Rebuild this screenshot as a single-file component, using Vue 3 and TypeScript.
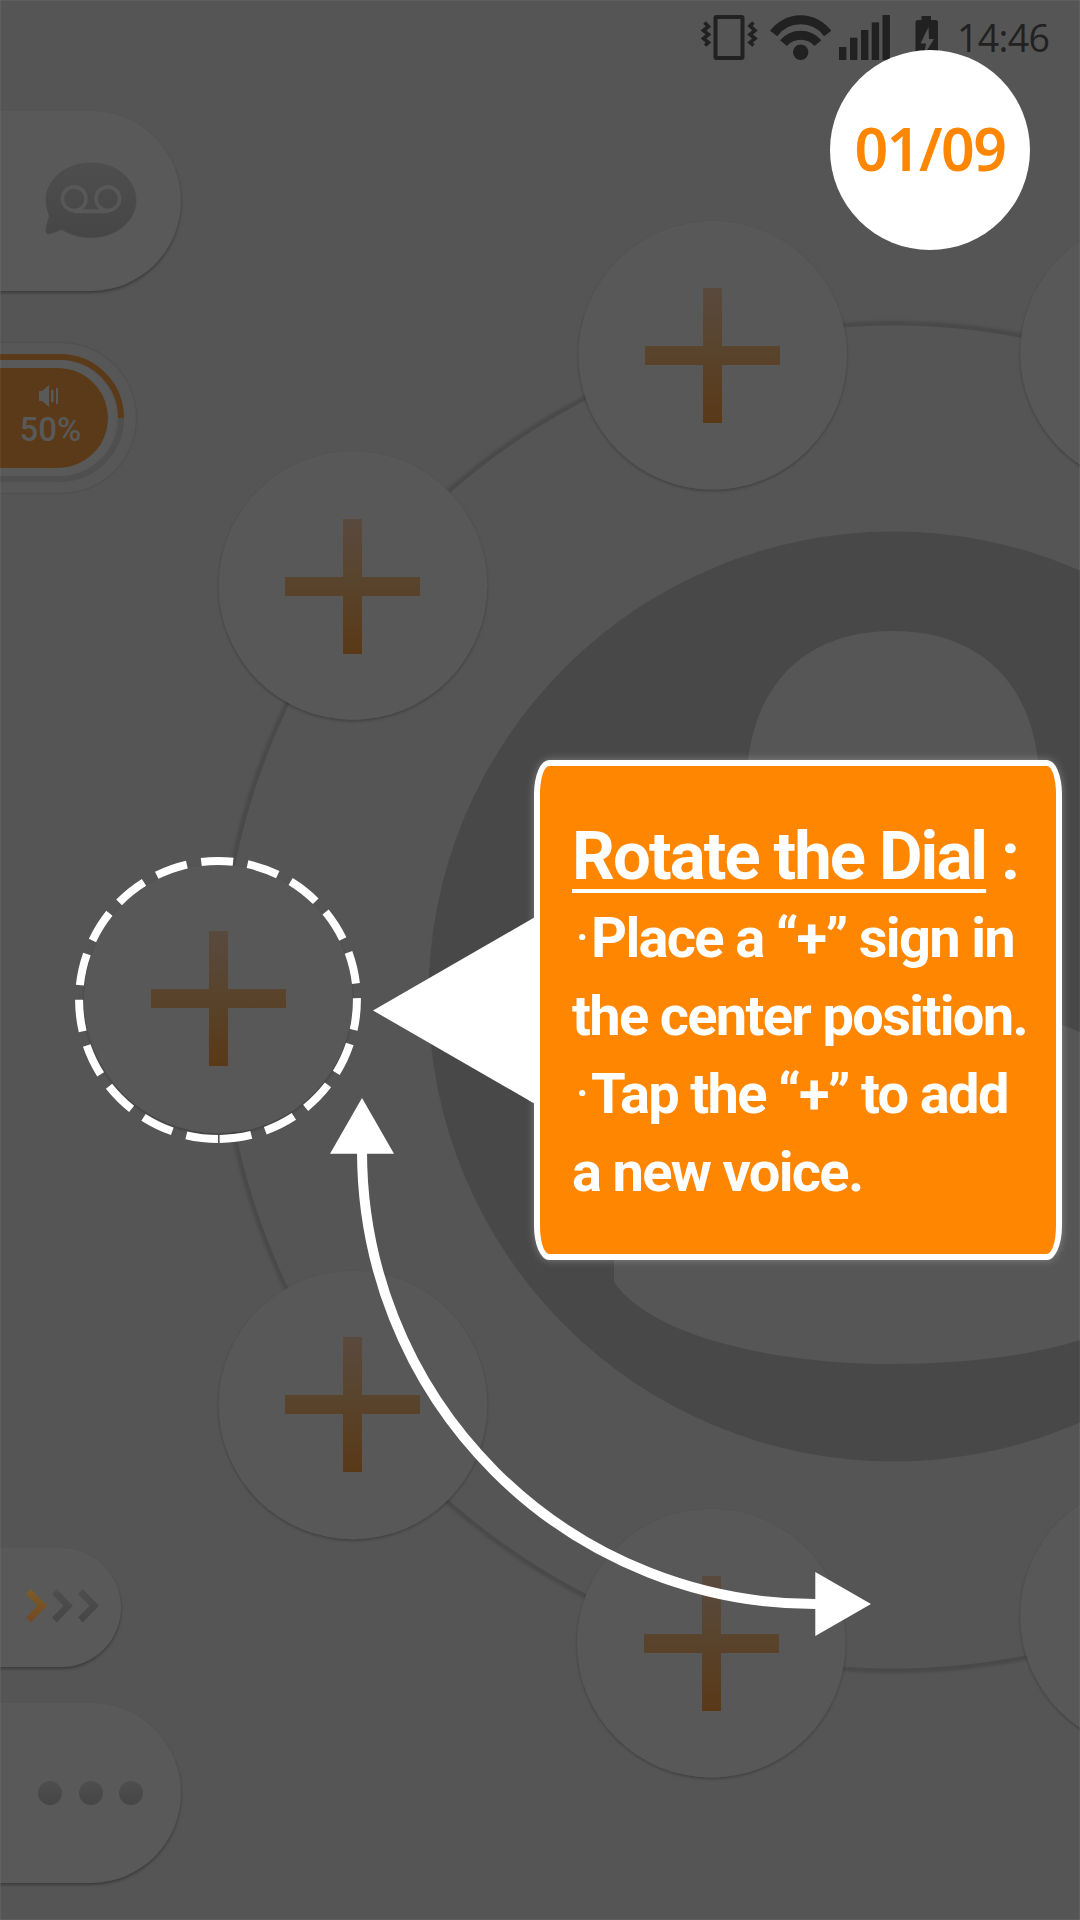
<script setup lang="ts">
interface Slot { x: number; y: number; px: number; py: number; plus: boolean }

const slots: Slot[] = [
  { x: 712.7, y: 355.3, px: 712.5, py: 355.5, plus: true },
  { x: 353, y: 585.5, px: 352.5, py: 586.5, plus: true },
  { x: 218.3, y: 999, px: 218.5, py: 998.5, plus: true },
  { x: 353, y: 1405, px: 352.5, py: 1404.5, plus: true },
  { x: 711.3, y: 1643.2, px: 711.5, py: 1643.5, plus: true },
  { x: 1154.5, y: 353, px: 0, py: 0, plus: false },
  { x: 1154.5, y: 1616, px: 0, py: 0, plus: false },
]

const bars = [
  { x: 0, y: 32 },
  { x: 11, y: 22.7 },
  { x: 22, y: 15 },
  { x: 32.7, y: 7.4 },
  { x: 43.5, y: 0 },
]
</script>

<template>
  <main class="screen">
    <svg class="dial" width="1080" height="1920" viewBox="0 0 1080 1920">
      <defs>
        <radialGradient id="rim" gradientUnits="userSpaceOnUse" cx="893.5" cy="997" r="679">
          <stop offset="0.9882" stop-color="#555555" />
          <stop offset="0.9897" stop-color="#494949" />
          <stop offset="0.9935" stop-color="#4a4a4a" />
          <stop offset="0.997" stop-color="#525252" />
          <stop offset="1" stop-color="#555555" />
        </radialGradient>
        <linearGradient id="plus" x1="0" y1="-67.5" x2="0" y2="67.5" gradientUnits="userSpaceOnUse">
          <stop offset="0" stop-color="#594a3e" />
          <stop offset="0.5" stop-color="#59432b" />
          <stop offset="1" stop-color="#593917" />
        </linearGradient>
        <filter id="drop" x="-10%" y="-10%" width="120%" height="120%">
          <feDropShadow dx="0" dy="1.5" stdDeviation="1.6" flood-color="#000" flood-opacity="0.28" />
        </filter>
      </defs>
      <circle cx="893.5" cy="997" r="679" fill="url(#rim)" />
      <circle cx="893.5" cy="996.5" r="465" fill="#484848" />
      <path fill="#565656" d="M747 770C753 690 800 631 893 631S1033 690 1039 770Z" />
      <path fill="#565656" d="M614 1240V1282C650 1335 770 1364 893 1364C965 1364 1030 1356 1080 1340V1032L1050 1020V1240Z" />
      <g v-for="(s, i) in slots" :key="i">
        <circle :cx="s.x" :cy="s.y" r="134.2" fill="#595959" filter="url(#drop)" />
        <path
          v-if="s.plus"
          :transform="`translate(${s.px} ${s.py})`"
          fill="url(#plus)"
          d="M-9.500 -67.500h19v58h58v19h-58v58h-19v-58h-58v-19h58z"
        />
      </g>
    </svg>

    <header class="status">
      <svg class="vibrate" width="58" height="46" viewBox="0 0 58 46">
        <rect x="15.500" y="2" width="27" height="41" rx="1" fill="none" stroke="#212121" stroke-width="4" />
        <g fill="none" stroke="#212121" stroke-width="3.600">
          <path d="M4.500 7.500L8.500 11.500L3.500 15.500L8.500 19.500L3.500 23.500L8.500 27.500L5 30.500" />
          <path d="M53.500 7.500L50 11L55 15.500L50 19.500L55 23.500L50 27.500L53.500 30.500" />
        </g>
      </svg>
      <svg class="wifi" width="62" height="46" viewBox="0 0 62 46">
        <g fill="none" stroke="#212121" stroke-width="9">
          <path d="M3.700 18.500A33.500 33.500 0 0 1 57.700 18.500" />
          <path d="M13.500 28.200A22.500 22.500 0 0 1 47.900 28.200" />
        </g>
        <circle cx="30.700" cy="37.300" r="7.700" fill="#212121" />
      </svg>
      <svg class="signal" width="51" height="46" viewBox="0 0 51 46">
        <rect v-for="b in bars" :key="b.x" :x="b.x" :y="b.y" width="7.400" :height="45 - b.y" fill="#212121" />
      </svg>
      <svg class="battery" width="24" height="46" viewBox="0 0 24 46">
        <path fill="#212121" d="M6.500 1h9.500v4h4.500q2.500 0 2.500 2.500V46H.5V7.500Q.5 5 3 5h3.500z" />
        <path fill="#555555" d="M13.500 12L5.500 28.500h5.500L9 40L19 24h-5z" />
      </svg>
      <time class="clock">14:46</time>
    </header>

    <aside class="rail">
      <div class="pill voicemail">
        <svg width="92" height="78" viewBox="45 162 92 78">
          <defs>
            <linearGradient id="grey" x1="0" y1="0" x2="0" y2="1">
              <stop offset="0" stop-color="#4e4e4e" />
              <stop offset="1" stop-color="#464646" />
            </linearGradient>
          </defs>
          <path
            fill="url(#grey)"
            stroke="#484848"
            stroke-width=".6"
            d="M91 163C116 163 136 179.500 136 200.300S116 237.600 91 237.600C80 237.600 69.500 234.500 61.500 229.300Q55.500 232 50 233.800Q45.500 234.500 46 230Q46.800 222.500 49.500 216Q46 208.500 46 200.300C46 179.500 66 163 91 163Z"
          />
          <g fill="none" stroke="#585858" stroke-width="3.600">
            <circle cx="74.200" cy="198.700" r="11.800" />
            <circle cx="107.800" cy="198.700" r="11.800" />
            <path d="M74 211.200H108" stroke-width="4" />
          </g>
        </svg>
      </div>
      <div class="volume">
        <svg class="track" width="136" height="150" viewBox="0 0 136 150">
          <path d="M0 136H60A61 61 0 0 0 121 75" fill="none" stroke="#4f4f4f" stroke-width="6" />
          <path d="M0 14H60A61 61 0 0 1 121 75" fill="none" stroke="#5a3a19" stroke-width="6" />
        </svg>
        <div class="level">
          <svg width="20" height="22" viewBox="0 0 20 22">
            <path fill="#595959" d="M0 6h3L10 0v22L3 16H0zM12 5h2.500v12H12zM17 3h2v16h-2z" />
          </svg>
          <span>50%</span>
        </div>
      </div>
      <div class="pill arrows">
        <svg width="74" height="34" viewBox="0 0 74 34">
          <defs>
            <linearGradient id="amber" x1="0" y1="0" x2="0" y2="1">
              <stop offset="0" stop-color="#7d5d27" />
              <stop offset="1" stop-color="#734722" />
            </linearGradient>
          </defs>
          <path fill="url(#amber)" d="M4.700 0L21 16.700L4.700 33.400L0 28.500L11.500 16.700L0 4.900Z" />
          <path fill="url(#grey)" d="M30.700 0L47 16.700L30.700 33.400L26 28.500L37.500 16.700L26 4.900Z" />
          <path fill="url(#grey)" d="M56.700 0L73 16.700L56.700 33.400L52 28.500L63.500 16.700L52 4.900Z" />
        </svg>
      </div>
      <div class="pill more"><i v-for="n in 3" :key="n" /></div>
    </aside>

    <svg class="guides" width="1080" height="1920" viewBox="0 0 1080 1920">
      <path
        d="M218 1139A139 139 0 0 1 218 861A139 139 0 0 1 218 1139"
        fill="none" stroke="#fff" stroke-width="8" stroke-dasharray="32 14.610"
      />
      <path d="M362 1151A453 453 0 0 0 816 1604" fill="none" stroke="#fff" stroke-width="10" />
      <path fill="#fff" d="M362 1098L394 1153.700H330ZM871 1604L815.300 1572V1636ZM373 1010.500L536 916.500V1104.500Z" />
    </svg>

    <section class="card">
      <h1><u>Rotate the Dial</u> :</h1>
      <p><b>·</b>Place a “+” sign in</p>
      <p>the center position.</p>
      <p><b>·</b>Tap the “+” to add</p>
      <p>a new voice.</p>
    </section>

    <div class="step">01/09</div>
    <div class="frame" />
  </main>
</template>

<style>
body { margin: 0; background: #555555; }
</style>

<style scoped>
.screen {
  position: relative;
  width: 1080px;
  height: 1920px;
  overflow: hidden;
  background: #555555;
  font-family: Roboto, "Liberation Sans", sans-serif;
}
.dial, .guides, .frame { position: absolute; inset: 0; }
.frame { border: 1px solid rgba(255, 255, 255, 0.06); }
.status {
  position: relative;
  display: flex;
  height: 111px;
  padding: 15px 29px 0 0;
  box-sizing: border-box;
  justify-content: flex-end;
  align-items: flex-start;
}
.wifi { margin-left: 12px; }
.signal { margin-left: 7px; }
.battery { margin-left: 25px; }
.clock {
  width: 94px;
  margin-left: 18px;
  font: 400 37.500px/46px "Open Sans", sans-serif;
  letter-spacing: -0.7px;
  color: #212121;
  white-space: nowrap;
}
.rail {
  position: relative;
  display: flex;
  flex-direction: column;
  align-items: flex-start;
  height: 1773px;
}
.pill {
  display: flex;
  align-items: center;
  box-sizing: border-box;
  background: #595959;
  box-shadow: 0 2px 3px rgba(0, 0, 0, 0.3);
}
.voicemail, .more { width: 181px; height: 180px; border-radius: 0 90px 90px 0; }
.voicemail { padding-left: 45px; }
.volume {
  position: relative;
  display: flex;
  align-items: center;
  width: 136px;
  height: 150px;
  margin-top: 52px;
  border-radius: 0 75px 75px 0;
  background: #575757;
  box-shadow: 0 0 1px 1px rgba(0, 0, 0, 0.08);
}
.track { position: absolute; inset: 0; }
.level {
  position: relative;
  display: flex;
  flex-direction: column;
  align-items: center;
  width: 108px;
  height: 100px;
  padding: 17px 11px 0 0;
  box-sizing: border-box;
  border-radius: 0 50px 50px 0;
  background: #5a3a19;
  outline: 8px solid #595959;
  color: #595959;
}
.level span {
  margin-top: 4px;
  margin-left: 4px;
  font-size: 33px;
  font-weight: 500;
  line-height: 38px;
}
.arrows {
  width: 121px;
  height: 119px;
  margin-top: 1055px;
  padding: 0 0 3px 26px;
  border-radius: 0 60px 60px 0;
}
.more { margin-top: 36px; padding-left: 38px; gap: 16.500px; }
.more i {
  width: 24px;
  height: 24px;
  border-radius: 50%;
  background: linear-gradient(#4e4e4e, #464646);
}
.card {
  position: absolute;
  left: 534px;
  top: 760px;
  width: 528px;
  height: 500px;
  box-sizing: border-box;
  padding: 51px 0 0 32px;
  border: 6px solid #fff;
  border-radius: 15px / 34px;
  background: #ff8600;
  box-shadow: 0 0 9px rgba(255, 255, 255, 0.3);
  color: #fff;
  white-space: nowrap;
}
.card h1 {
  margin: 0 0 2.600px;
  font-size: 67px;
  line-height: 79px;
  font-weight: 700;
  letter-spacing: -1.900px;
}
.card u {
  text-decoration-thickness: 4px;
  text-underline-offset: 10px;
}
.card p {
  margin: 0;
  font-size: 56px;
  line-height: 78px;
  font-weight: 700;
  letter-spacing: -1.680px;
}
.card b {
  display: inline-block;
  width: 16px;
  padding-left: 3px;
  font-weight: 400;
}
.step {
  position: absolute;
  left: 830px;
  top: 50px;
  width: 200px;
  height: 200px;
  border-radius: 50%;
  background: #fff;
  color: #ff8600;
  font: 600 59px/197px "Noto Sans", sans-serif;
  letter-spacing: -1.500px;
  text-align: center;
}
</style>
